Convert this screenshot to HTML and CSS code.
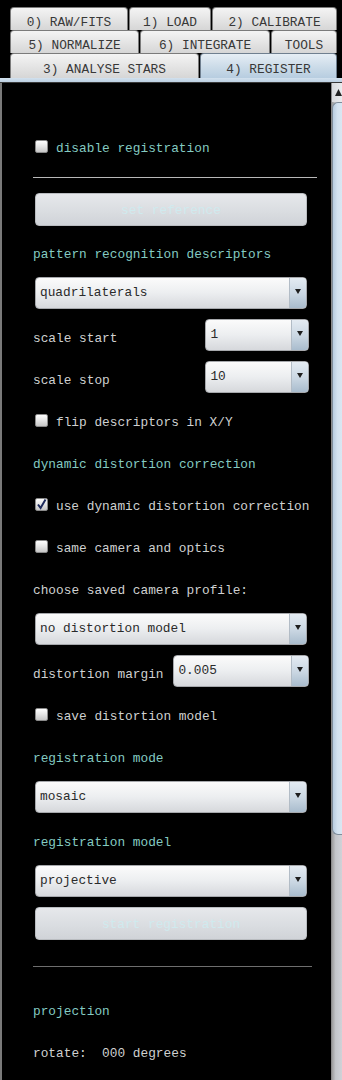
FILE: index.html
```html
<!DOCTYPE html>
<html>
<head>
<meta charset="utf-8">
<link rel="stylesheet" href="styles.css">
</head>
<body>
<div class="app">
  <div class="tabs">
    <div class="tabrow r1">
      <div class="tab t-118">0) RAW/FITS</div>
      <div class="tab t-82">1) LOAD</div>
      <div class="tab t-125">2) CALIBRATE</div>
    </div>
    <div class="tabrow r2">
      <div class="tab t-129">5) NORMALIZE</div>
      <div class="tab t-130">6) INTEGRATE</div>
      <div class="tab t-66">TOOLS</div>
    </div>
    <div class="tabrow r3">
      <div class="tab t-189">3) ANALYSE STARS</div>
      <div class="tab t-137 sel">4) REGISTER</div>
    </div>
  </div>
  <div class="band"></div>
  <div class="pane">
    <div class="content">
      <div class="row"><span class="cb"></span><span class="lbl teal">disable registration</span></div>
      <div class="sep sep-a"><div class="line line-a"></div></div>
      <div class="row"><div class="btn">set reference</div></div>
      <div class="row"><span class="txt teal">pattern recognition descriptors</span></div>
      <div class="row"><div class="combo"><span class="val">quadrilaterals</span><span class="arrow"></span></div></div>
      <div class="row split"><span class="txt grey">scale start</span><div class="combo c-104"><span class="val">1</span><span class="arrow"></span></div></div>
      <div class="row split"><span class="txt grey">scale stop</span><div class="combo c-104"><span class="val">10</span><span class="arrow"></span></div></div>
      <div class="row"><span class="cb"></span><span class="lbl grey">flip descriptors in X/Y</span></div>
      <div class="row"><span class="txt teal">dynamic distortion correction</span></div>
      <div class="row"><span class="cb checked"><svg width="13" height="13" viewBox="0 0 13 13"><path d="M3 6.5 L5.6 10 L10.5 1.5" fill="none" stroke="#1d2a5c" stroke-width="2"/></svg></span><span class="lbl grey">use dynamic distortion correction</span></div>
      <div class="row"><span class="cb"></span><span class="lbl grey">same camera and optics</span></div>
      <div class="row"><span class="txt grey">choose saved camera profile:</span></div>
      <div class="row"><div class="combo"><span class="val">no distortion model</span><span class="arrow"></span></div></div>
      <div class="row split"><span class="txt grey">distortion margin</span><div class="combo c-136"><span class="val">0.005</span><span class="arrow"></span></div></div>
      <div class="row"><span class="cb"></span><span class="lbl grey">save distortion model</span></div>
      <div class="row"><span class="txt teal">registration mode</span></div>
      <div class="row"><div class="combo"><span class="val">mosaic</span><span class="arrow"></span></div></div>
      <div class="row"><span class="txt teal">registration model</span></div>
      <div class="row"><div class="combo"><span class="val">projective</span><span class="arrow"></span></div></div>
      <div class="row"><div class="btn">start registration</div></div>
      <div class="sep sep-b"><div class="line line-b"></div></div>
      <div class="row"><span class="txt teal">projection</span></div>
      <div class="row"><span class="txt grey pre">rotate:  000 degrees</span></div>
    </div>
    <div class="scrollbar">
      <div class="sb-up"><svg width="7" height="7" viewBox="0 0 7 7"><path d="M3.5 0 L7 7 L0 7 Z" fill="#222"/></svg></div>
      <div class="sb-thumb"></div>
      <div class="sb-track"></div>
    </div>
  </div>
</div>
</body>
</html>
```

FILE: styles.css
```css
* { box-sizing: border-box; }
html, body {
  margin: 0;
  padding: 0;
  background: #000;
  overflow: hidden;
}
body {
  font-family: "Liberation Mono", "Courier New", monospace;
  font-size: 12.8px;
}
.app {
  width: 342px;
  height: 1080px;
  display: flex;
  flex-direction: column;
  background: #000;
}

/* tabs */
.tabs {
  padding: 7px 5px 0 10px;
  display: flex;
  flex-direction: column;
}
.tabrow {
  display: flex;
  gap: 1px;
}
.r1, .r2 { height: 23px; }
.r3 { height: 25px; }
.tab {
  height: 100%;
  border: 1px solid #7b7b7b;
  border-bottom: none;
  border-radius: 4px 4px 0 0;
  background: linear-gradient(#f4f4f4, #e2e2e2 60%, #d6d6d6);
  color: #383838;
  text-align: center;
  line-height: 17px;
  padding-top: 6px;
  white-space: nowrap;
}
.r3 .tab { padding-top: 6px; line-height: 19px; }
.tab.sel {
  background: linear-gradient(#e6eef5, #cbdbe8 55%, #b7cde0);
  border-color: #6f7f8f;
}
.t-118 { width: 118px; }
.t-82 { width: 82px; }
.t-125 { width: 125px; }
.t-129 { width: 129px; }
.t-130 { width: 130px; }
.t-66 { width: 66px; }
.t-189 { width: 189px; }
.t-137 { width: 137px; }

.band {
  height: 5px;
  background: linear-gradient(#d2e1ee, #bcd0e2);
  border-bottom: 1px solid #3a3a3a;
}

/* pane */
.pane {
  flex: 1;
  display: flex;
  min-height: 0;
  border-left: 2px solid #7a7a7a;
}
.content {
  flex: 1;
  padding: 41px 22px 0 31px;
  display: flex;
  flex-direction: column;
}
.row {
  height: 42px;
  flex: none;
  display: flex;
  align-items: center;
  white-space: nowrap;
  line-height: 42px;
}
.row.split { justify-content: space-between; }
.txt, .lbl { padding-top: 8px; }
.teal { color: #84cbc2; }
.grey { color: #cfd1d1; }
.pre { white-space: pre; }

.cb {
  width: 13px;
  height: 13px;
  margin-left: 2px;
  margin-top: 2px;
  border: 1px solid #8a8a8a;
  border-radius: 2px;
  background: linear-gradient(#fdfdfd, #e4e4e4 50%, #c6c6c6);
  flex: none;
  display: flex;
}
.cb svg { display: block; margin: -1px; }
.lbl { margin-left: 8px; }

.sep { flex: none; display: flex; flex-direction: column; }
.sep-a { height: 22px; padding-top: 11px; }
.sep-b { height: 43px; padding-top: 22px; }
.line { height: 1px; }
.line-a { background: #b8b8b8; margin-right: -8px; }
.line-b { background: #6e6e6e; margin-right: -3px; }

.btn {
  width: 272px;
  height: 33px;
  margin-left: 2px;
  border-radius: 4px;
  background: linear-gradient(#e6e8eb, #d9dce0 60%, #d0d3d8);
  border: 1px solid #b9bcc0;
  color: #d0eaee;
  text-align: center;
  line-height: 33px;
}

.combo {
  width: 272px;
  height: 32px;
  margin-left: 2px;
  border-radius: 4px;
  border: 1px solid #a6a8ac;
  background: linear-gradient(#fbfbfb, #eceef0 50%, #d6d8dc);
  display: flex;
  align-items: center;
  overflow: hidden;
  line-height: 32px;
}
.c-104 { width: 104px; }
.c-136 { width: 136px; }
.val {
  flex: 1;
  color: #2a2a2a;
  padding-left: 4px;
}
.arrow {
  width: 17px;
  height: 100%;
  border-left: 1px solid #b2bcc6;
  background: linear-gradient(#e4ebf2, #c9d6e2 55%, #a9bccd);
  display: flex;
  justify-content: center;
  padding-top: 11px;
}
.arrow::before {
  content: "";
  width: 0;
  height: 0;
  border-left: 3.5px solid transparent;
  border-right: 3.5px solid transparent;
  border-top: 5px solid #1e1e1e;
}

/* scrollbar */
.scrollbar {
  width: 13px;
  flex: none;
  display: flex;
  flex-direction: column;
  border-left: 1px solid #8c8c8c;
  background: linear-gradient(90deg, #9c9c9c, #c4c6ca 30%, #d4d6dc);
}
.sb-up {
  height: 19px;
  flex: none;
  background: linear-gradient(90deg, #d8dadd, #eef0f2);
  display: flex;
  justify-content: center;
  padding-top: 6px;
}
.sb-up svg { display: block; }
.sb-thumb {
  height: 733px;
  flex: none;
  border: 1px solid #7f8d9a;
  border-right: none;
  border-radius: 6px 0 0 6px;
  background: linear-gradient(90deg, #b9cde0, #d3e2ef 40%, #dde9f4);
}
.sb-track { flex: 1; }
```
